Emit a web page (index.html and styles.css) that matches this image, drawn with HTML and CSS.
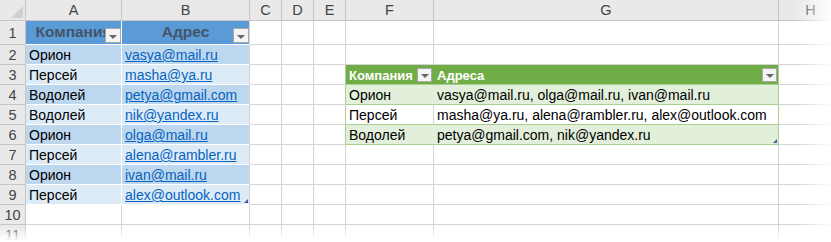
FILE: index.html
```html
<!DOCTYPE html>
<html>
<head>
  <title>Лист1</title>
  <link rel="stylesheet" href="styles.css">
</head>
<body>
  <div class="sheet">
    <!-- column letters -->
    <div class="row head">
      <div class="cell corner"></div>
      <div class="cell col">A</div>
      <div class="cell col">B</div>
      <div class="cell col">C</div>
      <div class="cell col">D</div>
      <div class="cell col">E</div>
      <div class="cell col">F</div>
      <div class="cell col">G</div>
      <div class="cell col">H</div>
    </div>

    <div class="row first">
      <div class="cell num">1</div>
      <div class="cell blue-head">Компания<span class="dd"></span></div>
      <div class="cell blue-head">Адрес<span class="dd"></span></div>
      <div class="cell"></div><div class="cell"></div><div class="cell"></div>
      <div class="cell"></div><div class="cell"></div><div class="cell"></div>
    </div>

    <div class="row">
      <div class="cell num">2</div>
      <div class="cell blue-dark">Орион</div>
      <div class="cell blue-dark"><a href="#">vasya@mail.ru</a></div>
      <div class="cell"></div><div class="cell"></div><div class="cell"></div>
      <div class="cell"></div><div class="cell"></div><div class="cell"></div>
    </div>

    <div class="row">
      <div class="cell num">3</div>
      <div class="cell blue-light">Персей</div>
      <div class="cell blue-light"><a href="#">masha@ya.ru</a></div>
      <div class="cell"></div><div class="cell"></div>
      <div class="cell green-edge"></div>
      <div class="cell green-head">Компания<span class="dd small"></span></div>
      <div class="cell green-head last">Адреса<span class="dd small"></span></div>
      <div class="cell"></div>
    </div>

    <div class="row">
      <div class="cell num">4</div>
      <div class="cell blue-dark">Водолей</div>
      <div class="cell blue-dark"><a href="#">petya@gmail.com</a></div>
      <div class="cell"></div><div class="cell"></div>
      <div class="cell green-edge"></div>
      <div class="cell green-band">Орион</div>
      <div class="cell green-band last">vasya@mail.ru, olga@mail.ru, ivan@mail.ru</div>
      <div class="cell"></div>
    </div>

    <div class="row">
      <div class="cell num">5</div>
      <div class="cell blue-light">Водолей</div>
      <div class="cell blue-light"><a href="#">nik@yandex.ru</a></div>
      <div class="cell"></div><div class="cell"></div>
      <div class="cell green-edge"></div>
      <div class="cell green-plain">Персей</div>
      <div class="cell green-plain last">masha@ya.ru, alena@rambler.ru, alex@outlook.com</div>
      <div class="cell"></div>
    </div>

    <div class="row">
      <div class="cell num">6</div>
      <div class="cell blue-dark">Орион</div>
      <div class="cell blue-dark"><a href="#">olga@mail.ru</a></div>
      <div class="cell"></div><div class="cell"></div>
      <div class="cell green-edge"></div>
      <div class="cell green-band bottom">Водолей</div>
      <div class="cell green-band bottom last grip">petya@gmail.com, nik@yandex.ru</div>
      <div class="cell"></div>
    </div>

    <div class="row">
      <div class="cell num">7</div>
      <div class="cell blue-light">Персей</div>
      <div class="cell blue-light"><a href="#">alena@rambler.ru</a></div>
      <div class="cell"></div><div class="cell"></div><div class="cell"></div>
      <div class="cell"></div><div class="cell"></div><div class="cell"></div>
    </div>

    <div class="row">
      <div class="cell num">8</div>
      <div class="cell blue-dark">Орион</div>
      <div class="cell blue-dark"><a href="#">ivan@mail.ru</a></div>
      <div class="cell"></div><div class="cell"></div><div class="cell"></div>
      <div class="cell"></div><div class="cell"></div><div class="cell"></div>
    </div>

    <div class="row">
      <div class="cell num">9</div>
      <div class="cell blue-light">Персей</div>
      <div class="cell blue-light grip"><a href="#">alex@outlook.com</a></div>
      <div class="cell"></div><div class="cell"></div><div class="cell"></div>
      <div class="cell"></div><div class="cell"></div><div class="cell"></div>
    </div>

    <div class="row">
      <div class="cell num">10</div>
      <div class="cell"></div><div class="cell"></div><div class="cell"></div><div class="cell"></div>
      <div class="cell"></div><div class="cell"></div><div class="cell"></div><div class="cell"></div>
    </div>

    <div class="row">
      <div class="cell num">11</div>
      <div class="cell"></div><div class="cell"></div><div class="cell"></div><div class="cell"></div>
      <div class="cell"></div><div class="cell"></div><div class="cell"></div><div class="cell"></div>
    </div>

    <!-- soft edges of the cut-out -->
    <div class="fade-right"></div>
    <div class="fade-bottom"></div>
  </div>
</body>
</html>
```

FILE: styles.css
```css
/* Base */
body {
  margin: 0;
  background: #fff;
  color: #000;
  font-family: "Liberation Sans", Arial, sans-serif;
  font-size: 14px;
}

.sheet {
  position: relative;
  width: 831px;
  height: 242px;
  overflow: hidden;
}

/* Grid rows: row numbers, A..H */
.row {
  display: grid;
  grid-template-columns: 26px 96px 128px 32px 32px 32px 88px 345px 64px;
  height: 20px;
}

.row.head {
  height: 21px;
}

.row.first {
  height: 24px;
}

.cell {
  position: relative;
  box-sizing: border-box;
  display: flex;
  align-items: flex-end;
  padding: 0 3px 1px;
  border-right: 1px solid #d4d4d4;
  border-bottom: 1px solid #d4d4d4;
  white-space: nowrap;
  overflow: hidden;
}

/* Headers */
.corner,
.col,
.num {
  background: #e9e9e9;
  color: #444;
  font-size: 14.5px;
  border-color: #c6c6c6;
}

.col {
  justify-content: center;
  align-items: center;
  padding: 0;
}

.num {
  justify-content: center;
  align-items: center;
  padding: 0;
}

.corner:after {
  content: "";
  position: absolute;
  right: 2px;
  bottom: 2px;
  width: 12px;
  height: 12px;
  background: #d0d0d0;
  clip-path: polygon(100% 0, 100% 100%, 0 100%);
}

/* Blue table */
.blue-head {
  background: #5b9bd5;
  color: #44546a;
  font-weight: bold;
  font-size: 15.5px;
  justify-content: center;
  align-items: center;
  border-right-color: #fff;
  border-bottom-color: #fff;
}

.blue-head + .blue-head {
  border-right-color: #d4d4d4;
}

.blue-dark,
.blue-light {
  border-right-color: #fff;
  border-bottom-color: #fff;
}

.blue-dark { background: #bdd7ee; }
.blue-light { background: #ddebf7; }

.blue-dark + .blue-dark,
.blue-light + .blue-light {
  border-right-color: #d4d4d4;
}

a {
  color: #0563c1;
  text-decoration: underline;
}

/* Green table */
.green-edge {
  border-right-color: #a9d08e;
}

.green-head {
  background: #70ad47;
  color: #fff;
  font-weight: bold;
  font-size: 13px;
  border-color: #a9d08e;
  border-right-color: #70ad47;
}

.green-band {
  background: #e2efda;
  border-bottom-color: #a9d08e;
  border-right-color: #e2efda;
}

.green-plain {
  border-bottom-color: #a9d08e;
}

.green-head.last,
.green-band.last,
.green-plain.last {
  border-right-color: #a9d08e;
}

/* Filter buttons */
.dd {
  position: absolute;
  right: 0;
  bottom: 1px;
  width: 16px;
  height: 15px;
  box-sizing: border-box;
  background: #f4f4f4;
  border: 1px solid #a9a9a9;
}

.dd.small {
  right: 1px;
  bottom: 2px;
  width: 15px;
  height: 14px;
}

.dd:after {
  content: "";
  position: absolute;
  left: 50%;
  top: 50%;
  margin: -1px 0 0 -4px;
  border-left: 4px solid transparent;
  border-right: 4px solid transparent;
  border-top: 4px solid #666;
}

/* Table resize corner */
.grip:after {
  content: "";
  position: absolute;
  right: 1px;
  bottom: 1px;
  width: 4px;
  height: 4px;
  background: #3c5aa8;
  clip-path: polygon(100% 0, 100% 100%, 0 100%);
}

/* Faded edges */
.fade-right {
  position: absolute;
  top: 0;
  right: 0;
  width: 36px;
  height: 100%;
  background: linear-gradient(to right, rgba(255, 255, 255, 0), rgba(255, 255, 255, 0.95));
}

.fade-bottom {
  position: absolute;
  left: 0;
  bottom: 0;
  width: 100%;
  height: 16px;
  background: linear-gradient(to bottom, rgba(255, 255, 255, 0), #fff 90%);
}
```
